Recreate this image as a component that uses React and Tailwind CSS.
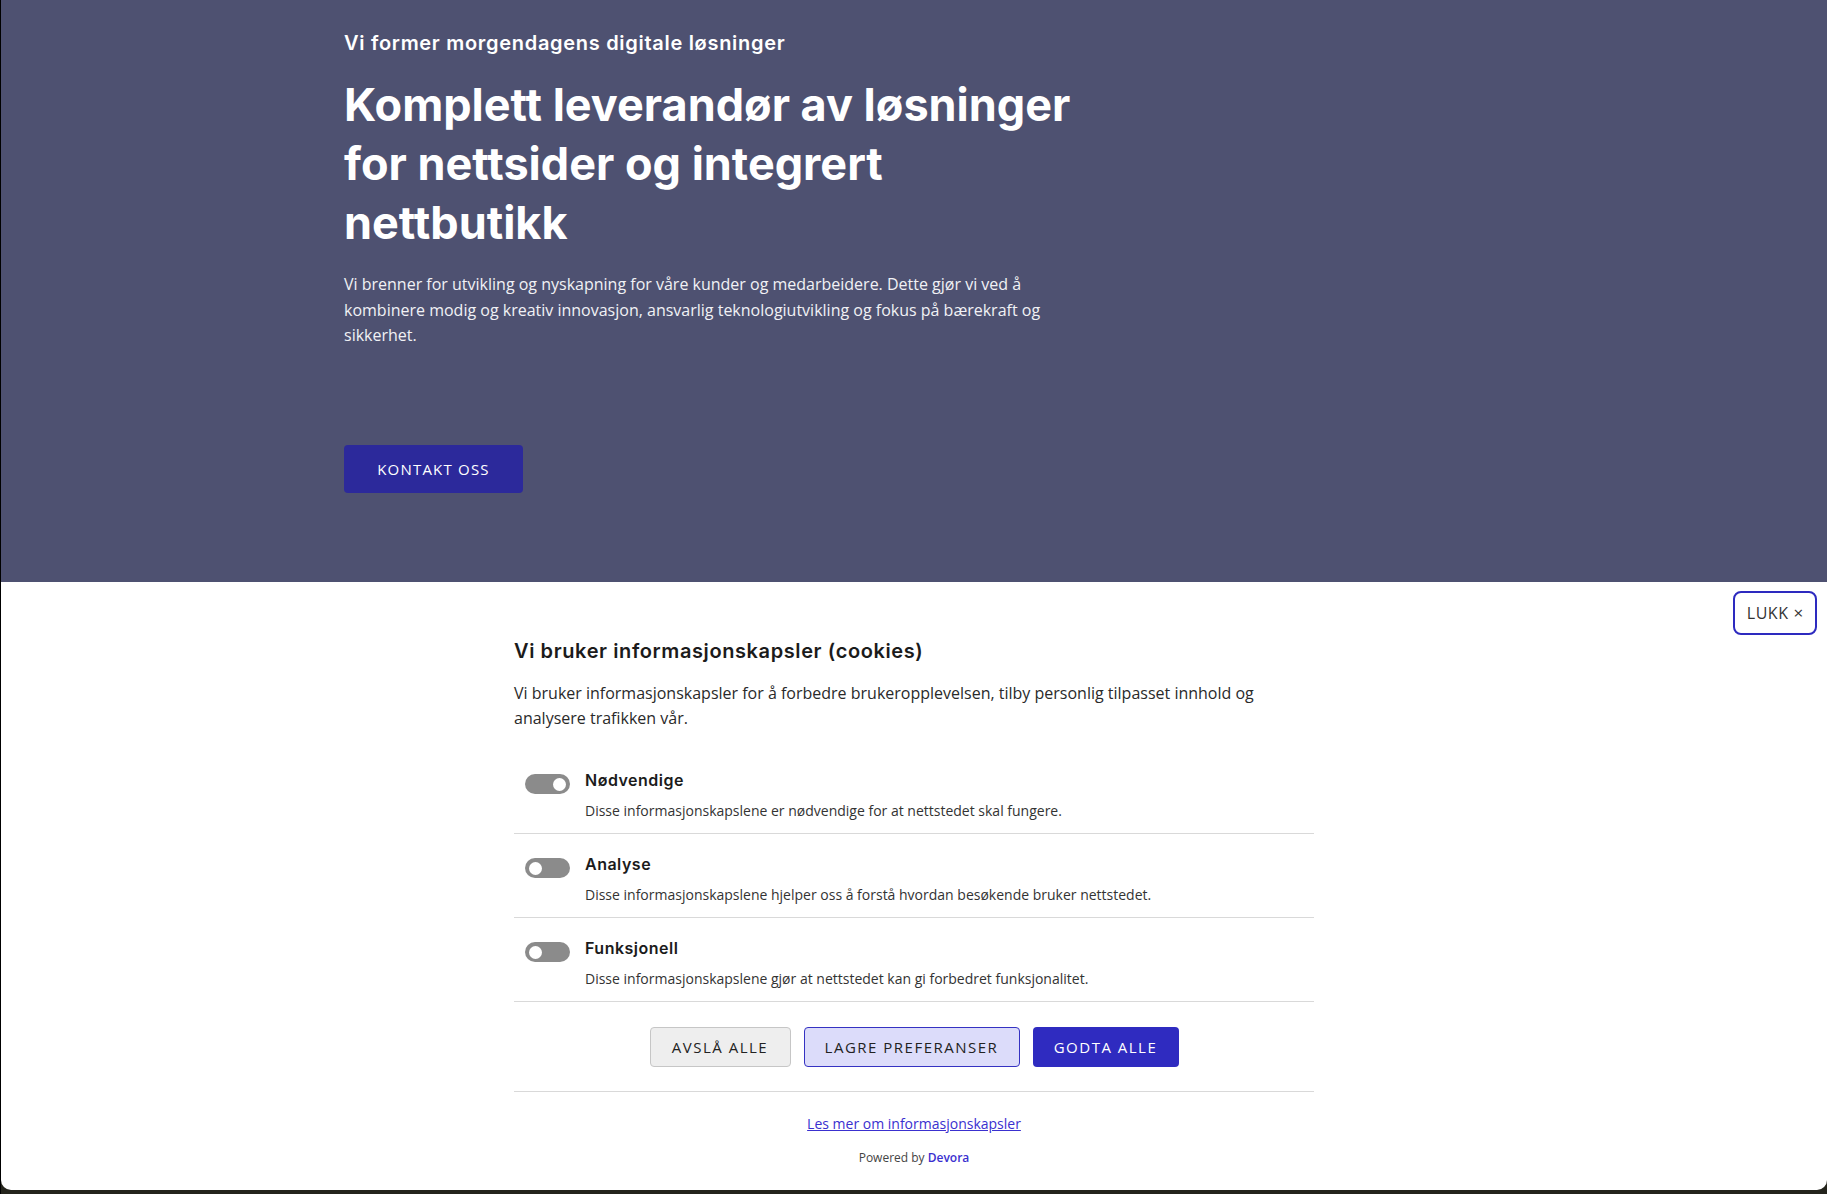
import React from 'react';

const heading = { fontFamily: 'Inter, "Noto Sans", sans-serif' };
const body = { fontFamily: '"Open Sans", "Noto Sans", sans-serif' };

const categories = [
  {
    id: 'necessary',
    title: 'Nødvendige',
    text: 'Disse informasjonskapslene er nødvendige for at nettstedet skal fungere.',
    on: true,
  },
  {
    id: 'analytics',
    title: 'Analyse',
    text: 'Disse informasjonskapslene hjelper oss å forstå hvordan besøkende bruker nettstedet.',
    on: false,
  },
  {
    id: 'functional',
    title: 'Funksjonell',
    text: 'Disse informasjonskapslene gjør at nettstedet kan gi forbedret funksjonalitet.',
    on: false,
  },
];

const Toggle = ({ on }) => (
  <div className={`flex h-[20px] w-[45px] shrink-0 items-center rounded-full bg-[#8b8b8b] px-[4px] ${on ? 'justify-end' : 'justify-start'}`}>
    <div className="h-[13px] w-[13px] rounded-full bg-white" />
  </div>
);

const Hero = () => (
  <section className="h-[582px] bg-[#4e5171] text-white">
    <div className="mx-auto w-[1140px] pt-[28px]">
      <div className="w-[740px]">
        <p className="text-[20px] font-semibold leading-[30px] tracking-[0.7px]" style={heading}>
          Vi former morgendagens digitale løsninger
        </p>
        <h1 className="mt-[17px] text-[45px] font-bold leading-[59px]" style={heading}>
          Komplett leverandør av løsninger for nettsider og integrert nettbutikk
        </h1>
        <p className="mt-[20px] text-[16px] leading-[25.6px] text-[#f1f1f5]" style={body}>
          Vi brenner for utvikling og nyskapning for våre kunder og medarbeidere. Dette gjør vi ved å kombinere modig og kreativ innovasjon, ansvarlig teknologiutvikling og fokus på bærekraft og sikkerhet.
        </p>
        <button
          className="mt-[96px] h-[48px] w-[179px] rounded-[4px] bg-[#2c299b] text-[15px] tracking-[1.2px] text-white"
          style={body}
        >
          KONTAKT OSS
        </button>
      </div>
    </div>
  </section>
);

const CookiePanel = () => (
  <section className="relative h-[608px] rounded-b-[10px] bg-white" style={body}>
    <button className="absolute right-[10px] top-[9px] flex h-[44px] w-[84px] items-center justify-center gap-[5px] rounded-[8px] border-2 border-[#2d2abf] bg-white text-[16px] text-[#333]">
      <span className="tracking-[0.5px]">LUKK</span>
      <span className="text-[17px]">×</span>
    </button>

    <div className="mx-auto w-[800px] pt-[54px]">
      <h2 className="text-[20px] font-semibold leading-[30px] tracking-[0.6px] text-[#1b1b1b]" style={heading}>
        Vi bruker informasjonskapsler (cookies)
      </h2>
      <p className="mt-[15px] text-[16px] leading-[24.5px] text-[#2a2a2a]">
        Vi bruker informasjonskapsler for å forbedre brukeropplevelsen, tilby personlig tilpasset innhold og analysere trafikken vår.
      </p>

      <div className="mt-[20px]">
        {categories.map((c) => (
          <div key={c.id} className="flex gap-[15px] border-b border-[#d9d9d9] pb-[12px] pl-[11px] pt-[18px]">
            <div className="pt-[6px]">
              <Toggle on={c.on} />
            </div>
            <div>
              <div className="text-[16px] font-semibold leading-[24px] tracking-[0.5px] text-[#1b1b1b]" style={heading}>
                {c.title}
              </div>
              <div className="mt-[9px] text-[14px] leading-[20px] text-[#333]">{c.text}</div>
            </div>
          </div>
        ))}
      </div>

      <div className="mt-[25px] flex justify-center gap-[13px]">
        <button className="h-[40px] w-[141px] rounded-[4px] border border-[#c6c6c6] bg-[#eeeeee] text-[15px] tracking-[1.5px] text-[#222]">
          AVSLÅ ALLE
        </button>
        <button className="h-[40px] w-[216px] rounded-[4px] border border-[#3532c2] bg-[#dcdcfa] text-[15px] tracking-[1.5px] text-[#222]">
          LAGRE PREFERANSER
        </button>
        <button className="h-[40px] w-[146px] rounded-[4px] bg-[#2f2bc0] text-[15px] tracking-[1.5px] text-white">
          GODTA ALLE
        </button>
      </div>

      <div className="mt-[24px] border-t border-[#d9d9d9] pt-[19px] text-center">
        <a href="#" className="text-[14px] leading-[22px] text-[#3a30cf] underline">
          Les mer om informasjonskapsler
        </a>
        <p className="mt-[14px] text-[12px] leading-[18px] text-[#444]">
          Powered by <span className="font-semibold text-[#3a30cf]">Devora</span>
        </p>
      </div>
    </div>
  </section>
);

export default function App() {
  return (
    <div className="h-[1194px] overflow-hidden border-l border-black bg-[#24241c]">
      <Hero />
      <CookiePanel />
    </div>
  );
}
